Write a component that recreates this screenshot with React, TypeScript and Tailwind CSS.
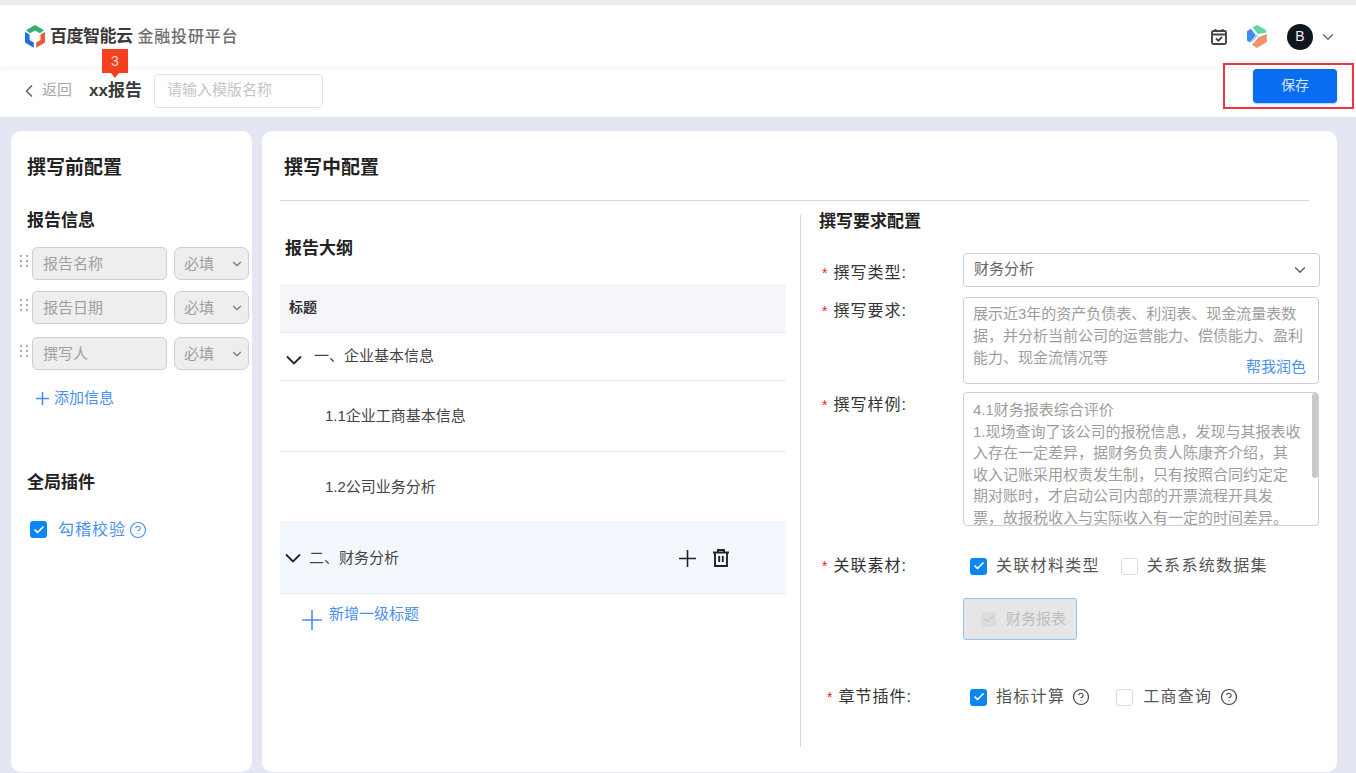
import { ChevronDown, ChevronLeft, CircleHelp, Check } from 'lucide-react';

const fontStack = { fontFamily: '"Liberation Sans", "Noto Sans CJK SC", sans-serif' };

function LogoMark() {
  return (
    <svg width="24" height="25" viewBox="0 0 24 24">
      <path d="M12 .5 L21 5.8 L17 8.8 L12 6 L7 8.8 L3 5.8 Z" fill="#2fb06f" />
      <path d="M2 7.5 L6.5 10 V15.5 L10.8 18 V23.3 L2 18 Z" fill="#1f6fe8" />
      <path d="M22 7.5 L17.5 10 V15.5 L13.2 18 V23.3 L22 18 Z" fill="#ee5a34" />
    </svg>
  );
}

function ProductMark() {
  return (
    <svg width="24" height="25" viewBox="0 0 24 24">
      <path d="M12 .5 L20.5 5.2 L21.5 8 L13 9.5 L7.5 3 Z" fill="#62d6a0" />
      <path d="M6 4.2 L2 6.8 V16 L5 18 L10.8 10.8 Z" fill="#3d8cf4" />
      <path d="M21.8 9.5 V17.5 L12 23.5 L7 20.2 L13.8 12.5 Z" fill="#f5916e" />
      <path d="M11 10.8 L13.6 10.2 L8 17 L5.8 17.8 Z" fill="#8fd8e8" />
    </svg>
  );
}

function PlusMark({ size, color = '#4a90f0', className = '' }: { size: number; color?: string; className?: string }) {
  return (
    <svg width={size} height={size} viewBox="0 0 20 20" fill="none" stroke={color} strokeWidth={(1.6 * 20) / size} className={`shrink-0 ${className}`}>
      <path d="M10 0 V20 M0 10 H20" />
    </svg>
  );
}

function Checkbox({ checked = false }: { checked?: boolean }) {
  if (checked) {
    return (
      <span className="flex h-[17px] w-[17px] shrink-0 items-center justify-center rounded-[3px] bg-[#0b87f5]">
        <Check className="h-3 w-3 text-white" strokeWidth={3.5} />
      </span>
    );
  }
  return <span className="block h-[17px] w-[17px] shrink-0 rounded-[3px] border border-[#dcdcdc] bg-white" />;
}

function DragDots() {
  return (
    <span className="ml-px grid w-[8px] grid-cols-2 gap-x-[3px] gap-y-[3px] pt-[8px]">
      {[0, 1, 2, 3, 4, 5].map((i) => (
        <span key={i} className="h-[2px] w-[2px] bg-[#a9a9a9]" />
      ))}
    </span>
  );
}

function RowChevron({ className = '' }: { className?: string }) {
  return (
    <svg width="18" height="12" viewBox="0 0 18 12" fill="none" stroke="#222222" strokeWidth="1.8" className={className}>
      <path d="M2 2.5 L9 9.5 L16 2.5" />
    </svg>
  );
}

function TrashIcon() {
  return (
    <svg width="20" height="20" viewBox="0 0 20 20" fill="none" stroke="#222222" strokeWidth="1.9">
      <path d="M2 4.5 H18 M7 4.5 V2 H13 V4.5 M4 4.5 V18 H16 V4.5" />
      <path d="M8.2 8 V14 M11.8 8 V14" />
    </svg>
  );
}

function InfoRow({ name, className }: { name: string; className: string }) {
  return (
    <div className={`flex items-start ${className}`}>
      <DragDots />
      <div className="ml-[4px] flex h-[33px] w-[135px] items-center rounded-[5px] border border-[#cfcfcf] bg-[#eeeeee] pl-[10px] pt-px text-[15px] text-[#a0a0a0]">
        {name}
      </div>
      <div className="ml-[7px] flex h-[33px] w-[75px] items-center justify-between rounded-[7px] border border-[#cfcfcf] bg-[#eeeeee] pl-[9px] pr-[4px] pt-px text-[15px] text-[#a0a0a0]">
        必填
        <ChevronDown className="h-[14px] w-[14px] text-[#777777]" />
      </div>
    </div>
  );
}

function FormLabel({ text, className = '' }: { text: string; className?: string }) {
  return (
    <div className={`flex shrink-0 items-start text-[16px] leading-[20px] tracking-[1px] text-[#333333] ${className}`}>
      <span className="mr-[5px] text-[14px] leading-[20px] text-[#ee1c25]">*</span>
      {text}:
    </div>
  );
}

function OutlineRow({ text, className, indent }: { text: string; className: string; indent?: boolean }) {
  return (
    <div className={`flex border-b border-[#e8eaee] text-[15px] text-[#444444] ${className}`}>
      {indent ? (
        <span className="pl-[45px] pt-[24px]">{text}</span>
      ) : (
        <div className="flex items-start pl-[5px] pt-[12px]">
          <RowChevron className="mt-[9px]" />
          <span className="ml-[11px]">{text}</span>
        </div>
      )}
    </div>
  );
}

export default function App() {
  return (
    <div style={fontStack} className="relative flex h-[773px] w-[1356px] flex-col overflow-hidden bg-[#e4e6f3] pb-px">
      <div className="h-[5px] shrink-0 bg-[#ececec]" />
      {/* header */}
      <div className="z-10 flex h-[62px] shrink-0 items-center justify-between bg-white pl-[23px] pr-[19px] pt-[1px] shadow-[0_2px_4px_rgba(0,0,0,0.05)]">
        <div className="flex items-center">
          <LogoMark />
          <span className="ml-[3px] text-[17px] font-bold tracking-[-0.5px] text-[#3a3a3a]">百度智能云</span>
          <span className="ml-[5px] text-[16px] font-medium tracking-[0.8px] text-[#6e6e6e]">金融投研平台</span>
        </div>
        <div className="flex items-center">
          <svg width="18" height="18" viewBox="0 0 18 18" fill="none" stroke="#444444" strokeWidth="1.9">
            <rect x="2" y="3" width="14" height="13" rx="1.5" />
            <path d="M2 6.5 H16 M5.5 1 V4 M12.5 1 V4 M6 10.5 L8.3 12.6 L12 9" />
          </svg>
          <span className="ml-[17px]">
            <ProductMark />
          </span>
          <span className="ml-[18px] flex h-[26px] w-[26px] items-center justify-center rounded-full bg-[#10161f] text-[14px] text-[#f2f2f2]">
            B
          </span>
          <ChevronDown className="ml-[6px] h-[18px] w-[18px] text-[#666666]" strokeWidth={1.8} />
        </div>
      </div>

      {/* sub bar */}
      <div className="flex h-[50px] shrink-0 items-center justify-between bg-white pl-[19px] pr-[19px]">
        <div className="mb-[3px] flex items-center">
          <ChevronLeft className="h-[20px] w-[20px] text-[#666666]" strokeWidth={2} />
          <span className="ml-[3px] text-[15px] text-[#a8a8a8]">返回</span>
          <span className="ml-[17px] text-[17px] font-bold text-[#3a3a3a]">xx报告</span>
          <div className="ml-[12px] flex h-[34px] w-[169px] items-center rounded-[4px] border border-[#e3e3e3] pl-[12px] text-[15px] text-[#c4c4c4]">
            请输入模版名称
          </div>
        </div>
        <button className="mb-[13px] h-[34px] w-[84px] rounded-[4px] bg-[#0a6cf0] text-[14px] text-[#d5e6ff] shadow-[0_1px_2px_rgba(10,108,240,0.4)]">
          保存
        </button>
      </div>

      {/* content */}
      <div className="mt-[14px] flex min-h-0 flex-1 gap-[10px] pl-[11px] pr-[19px]">
        {/* left panel */}
        <div className="w-[241px] shrink-0 rounded-[10px] bg-white pl-[8px]">
          <h2 className="pl-[8px] pt-[26px] text-[19px] font-bold leading-[22px] text-[#222222]">撰写前配置</h2>
          <h3 className="pl-[8px] pt-[32px] text-[17px] font-bold leading-[20px] text-[#222222]">报告信息</h3>
          <InfoRow name="报告名称" className="mt-[16px]" />
          <InfoRow name="报告日期" className="mt-[11px]" />
          <InfoRow name="撰写人" className="mt-[13px]" />
          <div className="ml-[17px] mt-[17px] flex items-center text-[15px] text-[#4a90f0]">
            <PlusMark size={13} />
            <span className="ml-[5px]">添加信息</span>
          </div>
          <h3 className="pl-[8px] pt-[63px] text-[17px] font-bold leading-[20px] text-[#222222]">全局插件</h3>
          <div className="ml-[11px] mt-[25px] flex items-center text-[16px] tracking-[1px] text-[#4a90f0]">
            <Checkbox checked />
            <span className="ml-[11px]">勾稽校验</span>
            <CircleHelp className="ml-[3px] h-[18px] w-[18px]" strokeWidth={1.6} />
          </div>
        </div>

        {/* right panel */}
        <div className="min-w-0 flex-1 rounded-[10px] bg-white pl-[18px] pr-[28px]">
          <h2 className="pl-[4px] pt-[26px] text-[19px] font-bold leading-[22px] text-[#222222]">撰写中配置</h2>
          <div className="mt-[21px] border-t border-[#d6d6d6]" />
          <div className="flex">
            {/* outline */}
            <div className="w-[506px] shrink-0 pt-[38px]">
              <h3 className="pl-[5px] text-[17px] font-bold leading-[20px] text-[#222222]">报告大纲</h3>
              <div className="mt-[25px] flex h-[49px] items-center border-b border-[#e8eaee] bg-[#f5f6fa] pb-[2px] pl-[9px] text-[14px] font-bold text-[#333333]">
                标题
              </div>
              <OutlineRow text="一、企业基本信息" className="h-[48px]" />
              <OutlineRow text="1.1企业工商基本信息" className="h-[71px]" indent />
              <OutlineRow text="1.2公司业务分析" className="h-[71px]" indent />
              <div className="flex h-[71px] items-start justify-between border-b border-[#e8eaee] bg-[#f3f8ff] pl-[4px] pr-[55px] pt-[24px] text-[15px] text-[#444444]">
                <div className="flex items-start">
                  <RowChevron className="mt-[5px]" />
                  <span className="ml-[7px]">二、财务分析</span>
                </div>
                <div className="flex items-center gap-[15px] pt-[1px]">
                  <PlusMark size={17} color="#222222" />
                  <TrashIcon />
                </div>
              </div>
              <div className="ml-[22px] mt-[9px] flex items-start text-[15px] leading-[22px] text-[#4a90f0]">
                <PlusMark size={20} className="mt-[7px]" />
                <span className="ml-[7px]">新增一级标题</span>
              </div>
            </div>

            {/* requirements */}
            <div className="ml-[14px] mt-[14px] h-[532px] flex-1 border-l border-[#d6d6d6] pl-[18px]">
              <h3 className="text-[17px] font-bold leading-[14px] text-[#222222]">撰写要求配置</h3>
              <div className="mt-[24px] flex">
                <FormLabel text="撰写类型" className="h-[38px] w-[144px] pl-[3px] pt-[10px]" />
                <div className="flex h-[34px] w-[357px] items-center justify-between rounded-[4px] border border-[#cfcfcf] pb-px pl-[10px] pr-[10px] text-[15px] text-[#666666]">
                  财务分析
                  <ChevronDown className="h-[18px] w-[18px] text-[#555555]" strokeWidth={1.6} />
                </div>
              </div>
              <div className="mt-[6px] flex">
                <FormLabel text="撰写要求" className="w-[144px] pl-[3px] pt-[4px]" />
                <div className="relative h-[87px] w-[356px] rounded-[4px] border border-[#cfcfcf] pl-[9px] pr-[10px] pt-[5px] text-[15px] leading-[22px] text-[#9d9d9d]">
                  展示近3年的资产负债表、利润表、现金流量表数据，并分析当前公司的运营能力、偿债能力、盈利能力、现金流情况等
                  <span className="absolute bottom-[7px] right-[12px] leading-[18px] text-[#4a90f0]">帮我润色</span>
                </div>
              </div>
              <div className="mt-[8px] flex">
                <FormLabel text="撰写样例" className="w-[144px] pl-[3px] pt-[3px]" />
                <div className="relative h-[134px] w-[356px] overflow-hidden rounded-[4px] border border-[#cfcfcf] pl-[9px] pr-[16px] pt-[6px] text-[15px] leading-[21.5px] text-[#9d9d9d]">
                  4.1财务报表综合评价
                  <br />
                  1.现场查询了该公司的报税信息，发现与其报表收入存在一定差异，据财务负责人陈康齐介绍，其收入记账采用权责发生制，只有按照合同约定定期对账时，才启动公司内部的开票流程开具发票，故报税收入与实际收入有一定的时间差异。
                  <span className="absolute right-0 top-0 h-[85px] w-[6px] rounded-[3px] bg-[#c9c9c9]" />
                </div>
              </div>
              <div className="mt-[28px] flex items-center">
                <FormLabel text="关联素材" className="w-[151px] pl-[3px]" />
                <Checkbox checked />
                <span className="ml-[9px] text-[16px] tracking-[1.3px] text-[#555555]">关联材料类型</span>
                <span className="ml-[21px]">
                  <Checkbox />
                </span>
                <span className="ml-[9px] text-[16px] tracking-[1.3px] text-[#555555]">关系系统数据集</span>
              </div>
              <div className="ml-[144px] mt-[20px] flex h-[42px] w-[114px] items-center rounded-[3px] border border-[#8cc4fb] bg-[#e6e6e6] pl-[17px] text-[15px] text-[#bdbdbd]">
                <span className="flex h-[15px] w-[15px] items-center justify-center rounded-[2px] bg-[#dcdcdc]">
                  <Check className="h-3 w-3 text-[#bdbdbd]" strokeWidth={2} />
                </span>
                <span className="ml-[10px]">财务报表</span>
              </div>
              <div className="mt-[45px] flex items-center">
                <FormLabel text="章节插件" className="w-[151px] pl-[8px]" />
                <Checkbox checked />
                <span className="ml-[9px] text-[16px] tracking-[1.3px] text-[#555555]">指标计算</span>
                <CircleHelp className="ml-[7px] h-[18px] w-[18px] text-[#444444]" strokeWidth={1.6} />
                <span className="ml-[26px]">
                  <Checkbox />
                </span>
                <span className="ml-[10px] text-[16px] tracking-[1.3px] text-[#555555]">工商查询</span>
                <CircleHelp className="ml-[8px] h-[18px] w-[18px] text-[#444444]" strokeWidth={1.6} />
              </div>
            </div>
          </div>
        </div>
      </div>

      {/* annotation overlays */}
      <div className="absolute left-[102px] top-[49px] z-20 flex h-[24px] w-[26px] items-center justify-center bg-[#f5401f] text-[14px] text-[#ffd9cf]">
        3
        <span className="absolute -bottom-[5px] left-[9px] h-0 w-0 border-x-[4px] border-t-[5px] border-x-transparent border-t-[#f5401f]" />
      </div>
      <div className="absolute left-[1223px] top-[63px] z-20 h-[46px] w-[131px] border-2 border-[#f5333f]" />
    </div>
  );
}
